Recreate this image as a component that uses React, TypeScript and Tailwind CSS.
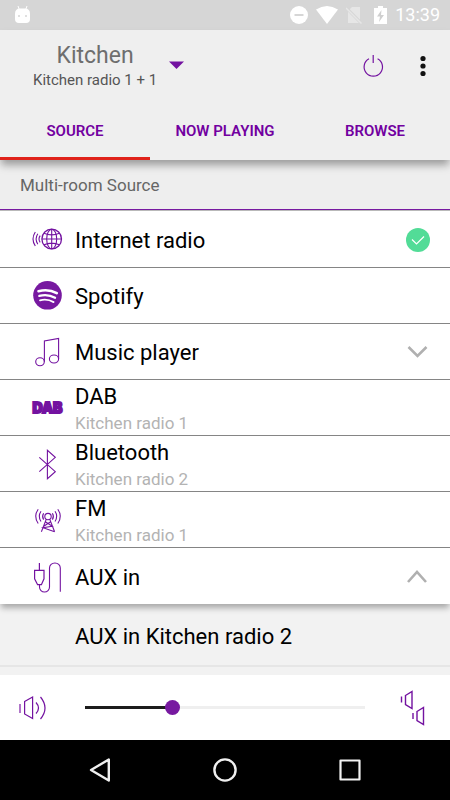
import React, { useState } from 'react';
import clsx from 'clsx';

interface Source {
  name: string;
  room?: string;
  icon: React.ReactNode;
  status?: 'selected' | 'collapsed' | 'expanded';
}

interface IconProps {
  children: React.ReactNode;
}

const SourceIcon: React.FC<IconProps> = ({ children }) => (
  <svg
    width="32"
    height="31"
    viewBox="0 0 32 31"
    fill="none"
    stroke="#7312a0"
    strokeWidth="1.1"
    className="shrink-0 overflow-visible"
    aria-hidden="true"
  >
    {children}
  </svg>
);

const sources: Source[] = [
  {
    name: 'Internet radio',
    status: 'selected',
    icon: (
      <SourceIcon>
        <circle cx="20.7" cy="15" r="9.8" strokeWidth="1.3" />
        <ellipse cx="20.7" cy="15" rx="5" ry="9.8" />
        <path d="M20.7 5.2v19.6M10.9 15h19.6M13 9.2q7.7 3.4 15.4 0M13 20.8q7.7-3.4 15.4 0" />
        <path d="M4.3 8q-4.6 7 0 14M6.8 9.8q-3.4 5.2 0 10.4M9.2 11.6q-2.4 3.4 0 6.8" />
      </SourceIcon>
    ),
  },
  {
    name: 'Spotify',
    icon: (
      <SourceIcon>
        <circle cx="16.5" cy="15.3" r="14.3" fill="#7719a0" stroke="none" />
        <g stroke="#fff" strokeLinecap="round">
          <path d="M7.5 11.2q10-2.6 18.3 2" strokeWidth="2.6" />
          <path d="M8.3 15.9q8.6-2.2 15.8 1.9" strokeWidth="2.2" />
          <path d="M9 20.3q7.4-1.8 13.6 1.8" strokeWidth="1.8" />
        </g>
      </SourceIcon>
    ),
  },
  {
    name: 'Music player',
    status: 'collapsed',
    icon: (
      <SourceIcon>
        <ellipse cx="9" cy="25.7" rx="4.3" ry="4" />
        <ellipse cx="23" cy="23" rx="4.6" ry="4" />
        <path d="M13.4 25.7V5l14.2-2.6V23" />
      </SourceIcon>
    ),
  },
  {
    name: 'DAB',
    room: 'Kitchen radio 1',
    icon: (
      <SourceIcon>
        <text
          x="16.5"
          y="21"
          textAnchor="middle"
          fill="#7312a0"
          strokeWidth="1.8"
          fontSize="14"
          fontWeight="900"
          fontFamily="Inter, sans-serif"
        >
          DAB
        </text>
      </SourceIcon>
    ),
  },
  {
    name: 'Bluetooth',
    room: 'Kitchen radio 2',
    icon: (
      <SourceIcon>
        <path d="M8.3 9.3l16 14.4-7.9 7V2.3l7.9 7-16 14.4" />
      </SourceIcon>
    ),
  },
  {
    name: 'FM',
    room: 'Kitchen radio 1',
    icon: (
      <SourceIcon>
        <circle cx="17" cy="12.6" r="3.2" />
        <path d="M15.2 15.4l-4.8 12.3M18.8 15.4l4.8 12.3M14.3 17.8l7 4.4-9.2 1.600 11.500 4M19.7 17.8l-7 4.4" />
        <path d="M7.2 5.3q-5 7 0 14.2M10 7.3q-3.4 5 0 10.2M12.6 9.2q-2 3.2 0 6.4M26.8 5.3q5 7 0 14.2M24 7.3q3.4 5 0 10.2M21.4 9.2q2 3.2 0 6.4" />
      </SourceIcon>
    ),
  },
  {
    name: 'AUX in',
    status: 'expanded',
    icon: (
      <SourceIcon>
        <path d="M8.4 2v7.4M3.6 9.4H13v8.4l-2.6 5.9H6.6l-3-5.9z" strokeWidth="1.2" />
        <path d="M8.5 23.7V26a5 5 0 0 0 10 0V7a5.4 5 0 0 1 10.8 0v23.7" />
      </SourceIcon>
    ),
  },
];

const tabs = ['SOURCE', 'NOW PLAYING', 'BROWSE'];

const StatusBar = () => (
  <div className="flex h-[30px] items-center justify-between bg-[#d6d6d6] pr-[10px] pl-[14px] text-white">
    <svg width="17" height="20" viewBox="0 0 17 20" aria-hidden="true">
      <path d="M4 1l1.5 4M13 1l-1.5 4" stroke="#fff" strokeWidth="1" />
      <path d="M1 9q0-5.500 5-5.500h5q5 0 5 5.500v5q0 4-4 4H5q-4 0-4-4z" fill="#fff" />
      <circle cx="5" cy="11" r="1" fill="#d6d6d6" />
      <circle cx="12" cy="11" r="1" fill="#d6d6d6" />
    </svg>
    <div className="flex items-center gap-2">
      <svg width="18" height="18" viewBox="0 0 18 18" aria-hidden="true">
        <circle cx="9" cy="9" r="9" fill="#fff" />
        <path d="M4.500 9h9" stroke="#d6d6d6" strokeWidth="2" />
      </svg>
      <svg width="22" height="18" viewBox="0 0 22 18" aria-hidden="true">
        <path d="M0 3.500Q11-3.500 22 3.500L11 18z" fill="#fff" />
      </svg>
      <svg width="16" height="18" viewBox="0 0 16 18" className="mr-1" aria-hidden="true">
        <path d="M6 1h8v16H2V5z" fill="#e6e6e6" />
        <path d="M-.5 1l16 16.500" stroke="#d6d6d6" strokeWidth="3" />
        <path d="M0 2l15.500 15.500" stroke="#e6e6e6" strokeWidth="1.500" />
      </svg>
      <svg width="13" height="18" viewBox="0 0 13 18" aria-hidden="true">
        <path d="M4 0h5v2h4v16H0V2h4z" fill="#fff" />
        <path d="M7.500 4L3 10.500h3L5 16l5-7H7z" fill="#cfcfcf" />
      </svg>
      <span className="text-lg leading-5">13:39</span>
    </div>
  </div>
);

const StatusMark: React.FC<{ status: Source['status'] }> = ({ status }) => {
  if (!status) return null;
  return (
    <svg width="24" height="24" viewBox="0 0 24 24" fill="none" className="shrink-0" aria-hidden="true">
      {status === 'selected' && (
        <>
          <circle cx="12" cy="12" r="12" fill="#52dc97" />
          <path d="M6 11.500l4.500 4.500 7.500-7.500" stroke="#fff" strokeWidth="1.200" />
        </>
      )}
      {status === 'collapsed' && <path d="M2.500 7l9 9 9-9" stroke="#b0b0b0" strokeWidth="2.600" />}
      {status === 'expanded' && <path d="M2 18l9-10 9 10" stroke="#b0b0b0" strokeWidth="2.600" />}
    </svg>
  );
};

const SourceRow: React.FC<{ source: Source }> = ({ source }) => {
  const { name, room, icon, status } = source;
  return (
    <li
      className={clsx(
        'h-14 bg-white',
        status === 'expanded'
          ? 'relative shadow-[0_5px_6px_-1px_rgba(0,0,0,0.3)]'
          : 'border-b border-[#858585]'
      )}
    >
      <button type="button" className="flex h-full w-full items-center gap-3 pr-5 pl-[31px] text-left">
        {icon}
        <span className="flex flex-1 flex-col pt-[3px]">
          <span className="text-[22px] leading-7 text-black">{name}</span>
          {room && <span className="text-[17px] leading-6 text-[#b3b3b3]">{room}</span>}
        </span>
        <StatusMark status={status} />
      </button>
    </li>
  );
};

const VolumeBar = () => {
  const [volume, setVolume] = useState(30);

  return (
    <footer className="flex h-[65px] items-center bg-white pr-5 pl-[18px]">
      <button type="button" aria-label="Mute">
        <svg width="32" height="26" viewBox="0 0 32 26" fill="none" stroke="#7312a0" strokeWidth="1.2">
          <path d="M2 9v9" stroke="#a866c4" strokeWidth="1.8" />
          <path d="M6.600 6.500l8-4.500v21.500l-8-4.500z" />
          <path d="M18 7.500q5 5.500 0 11M22.500 2q9 11 0 22" />
        </svg>
      </button>
      <input
        type="range"
        min="0"
        max="100"
        value={volume}
        onChange={(e) => setVolume(Number(e.target.value))}
        aria-label="Volume"
        className="mr-[35px] ml-[35px] h-[3px] min-w-0 flex-1 appearance-none [&::-webkit-slider-thumb]:size-[15px] [&::-webkit-slider-thumb]:appearance-none [&::-webkit-slider-thumb]:rounded-full [&::-webkit-slider-thumb]:bg-[#7719a0]"
        style={{ background: `linear-gradient(to right, #1c1c1c ${volume}%, #efefef ${volume}%)` }}
      />
      <button type="button" aria-label="Speaker volumes">
        <svg width="30" height="36" viewBox="0 0 30 36" fill="none" stroke="#7312a0" strokeWidth="1.4">
          <path d="M1.500 6.500v6M5.500 5.500l6.500-4v17l-6.500-4z" />
          <path d="M13 23v6M17 21.500l6.500-4v17l-6.500-4z" />
        </svg>
      </button>
    </footer>
  );
};

const NavigationBar = () => (
  <nav className="grid h-[60px] grid-cols-3 justify-items-center bg-black px-[37px]">
    <button type="button" aria-label="Back">
      <svg width="24" height="26" viewBox="0 0 24 26" fill="none" stroke="#f0f0f0" strokeWidth="2.400" strokeLinejoin="round">
        <path d="M20.800 2.500v21L3 13z" />
      </svg>
    </button>
    <button type="button" aria-label="Home">
      <svg width="24" height="24" viewBox="0 0 24 24" fill="none" stroke="#f0f0f0" strokeWidth="2.400">
        <circle cx="12" cy="12" r="10.600" />
      </svg>
    </button>
    <button type="button" aria-label="Recent apps">
      <svg width="22" height="22" viewBox="0 0 22 22" fill="none" stroke="#f0f0f0" strokeWidth="2.200" strokeLinejoin="round">
        <path d="M1.500 1.500h19v19h-19z" />
      </svg>
    </button>
  </nav>
);

const App = () => {
  const [activeTab, setActiveTab] = useState('SOURCE');

  return (
    <div className="flex min-h-screen flex-col bg-[#f2f2f2] font-['Roboto',sans-serif]">
      <StatusBar />

      {/* App bar */}
      <header className="relative z-10 bg-[#efefef] shadow-[0_6px_8px_-1px_rgba(0,0,0,0.35)]">
        <div className="flex h-[72px] items-center justify-between pr-6 pl-[33px]">
          <button type="button" className="flex items-center gap-3">
            <span className="flex flex-col items-center">
              <span className="text-[23px] leading-7 text-[#6e6e6e]">Kitchen</span>
              <span className="text-[15px] leading-5 text-[#555]">Kitchen radio 1 + 1</span>
            </span>
            <svg width="15" height="26" viewBox="0 0 15 26" aria-hidden="true">
              <path d="M0 8.500h15l-7.500 7.500z" fill="#7312a0" />
            </svg>
          </button>
          <div className="flex items-center gap-8">
            <button type="button" aria-label="Power">
              <svg width="22" height="24" viewBox="0 0 22 24" fill="none" stroke="#7312a0" strokeWidth="1.200">
                <path d="M7 4.800a9.200 9.200 0 1 0 8.600 0M11.200 1v8" />
              </svg>
            </button>
            <button type="button" aria-label="More options" className="pl-1">
              <svg width="6" height="22" viewBox="0 0 6 22" fill="#111">
                <circle cx="3" cy="3.500" r="2.600" />
                <circle cx="3" cy="11" r="2.600" />
                <circle cx="3" cy="18.500" r="2.600" />
              </svg>
            </button>
          </div>
        </div>
        <div role="tablist" className="grid grid-cols-3">
          {tabs.map((tab) => (
            <button
              key={tab}
              type="button"
              role="tab"
              aria-selected={activeTab === tab}
              onClick={() => setActiveTab(tab)}
              className={clsx(
                'h-[58px] border-y-3 border-t-transparent text-[15px] font-semibold text-[#7200a0]',
                activeTab === tab ? 'border-b-[#e0221b]' : 'border-b-transparent'
              )}
            >
              {tab}
            </button>
          ))}
        </div>
      </header>

      <main className="flex-1">
        <h2 className="flex h-[50px] items-center border-b border-[#7719a0] bg-[#eeeeee] pt-0.5 pl-5 text-[17px] text-[#666]">
          Multi-room Source
        </h2>
        <ul className="border-t border-[#b9b9b9] bg-white pt-px">
          {sources.map((source) => (
            <SourceRow key={source.name} source={source} />
          ))}
        </ul>
        <button
          type="button"
          className="mb-2 flex h-[63px] w-full items-center border-b-2 border-[#e6e6e6] pt-1 pl-[75px] text-[22px] text-black"
        >
          AUX in Kitchen radio 2
        </button>
      </main>

      <VolumeBar />
      <NavigationBar />
    </div>
  );
};

export default App;
